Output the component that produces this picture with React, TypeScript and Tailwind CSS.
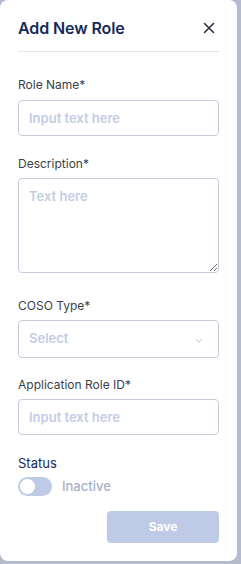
import { useState } from "react";

const Label = ({ text }: { text: string }) => (
  <label className="block text-[12px] leading-none text-[#3a3f4b]">{text}</label>
);

export default function App() {
  const [active, setActive] = useState(false);

  return (
    <div className="h-[564px] w-[241px] bg-[#b3bbcf] font-['Inter',sans-serif]">
      <div className="flex h-[561px] w-[237px] flex-col rounded-lg bg-white px-[18px]">
        <div className="flex h-[52px] items-center justify-between border-b border-[#e3e6ee] pt-[4px]">
          <h2 className="text-[16px] font-semibold tracking-[-0.1px] text-[#17295c]">Add New Role</h2>
          <button className="mr-[4px] text-[#2a2f3a]">
            <svg width="12" height="12" viewBox="0 0 12 12" fill="none" stroke="currentColor" strokeWidth="1.6" strokeLinecap="round">
              <path d="M1.5 1.5l9 9M10.5 1.5l-9 9" />
            </svg>
          </button>
        </div>

        <div className="mt-[27px]">
          <Label text="Role Name*" />
          <input
            className="mt-[9px] block h-[36px] w-full rounded-[4px] border border-[#c5cbdb] px-[10px] text-[13px] font-semibold placeholder:text-[#c3cde6] outline-none"
            placeholder="Input text here"
          />
        </div>

        <div className="mt-[22px]">
          <Label text="Description*" />
          <textarea
            className="mt-[8px] block h-[95px] w-full rounded-[4px] border border-[#c5cbdb] px-[10px] py-[8px] text-[13px] font-semibold placeholder:text-[#c3cde6] outline-none"
            placeholder="Text here"
          />
        </div>

        <div className="mt-[27px]">
          <Label text="COSO Type*" />
          <div className="mt-[8px] flex h-[38px] w-full items-center justify-between rounded-[4px] border border-[#c5cbdb] px-[10px]">
            <span className="text-[13px] font-semibold text-[#c3cde6]">Select</span>
            <svg width="8" height="5" viewBox="0 0 8 5" fill="none" stroke="#b9c1d4" strokeWidth="1" className="mr-[5px] mt-[2px]">
              <path d="M1 1l3 3 3-3" />
            </svg>
          </div>
        </div>

        <div className="mt-[21px]">
          <Label text="Application Role ID*" />
          <input
            className="mt-[8px] block h-[36px] w-full rounded-[4px] border border-[#c5cbdb] px-[10px] text-[13px] font-semibold placeholder:text-[#c3cde6] outline-none"
            placeholder="Input text here"
          />
        </div>

        <div className="mt-[22px]">
          <div className="text-[13px] leading-none text-[#17295c]">Status</div>
          <div className="mt-[7px] flex items-center gap-[10px]">
            <button
              onClick={() => setActive(!active)}
              className="flex h-[19px] w-[34px] items-center rounded-full bg-[#bfcae6] px-[2px]"
            >
              <span className="h-[15px] w-[15px] rounded-full bg-white" />
            </button>
            <span className="text-[13px] font-medium text-[#a9b1c6]">{active ? "Active" : "Inactive"}</span>
          </div>
        </div>

        <div className="mt-[14px] flex justify-end">
          <button className="h-[32px] w-[112px] rounded-[4px] bg-[#bfcbe6] text-[12px] font-bold text-white">
            Save
          </button>
        </div>
      </div>
    </div>
  );
}
